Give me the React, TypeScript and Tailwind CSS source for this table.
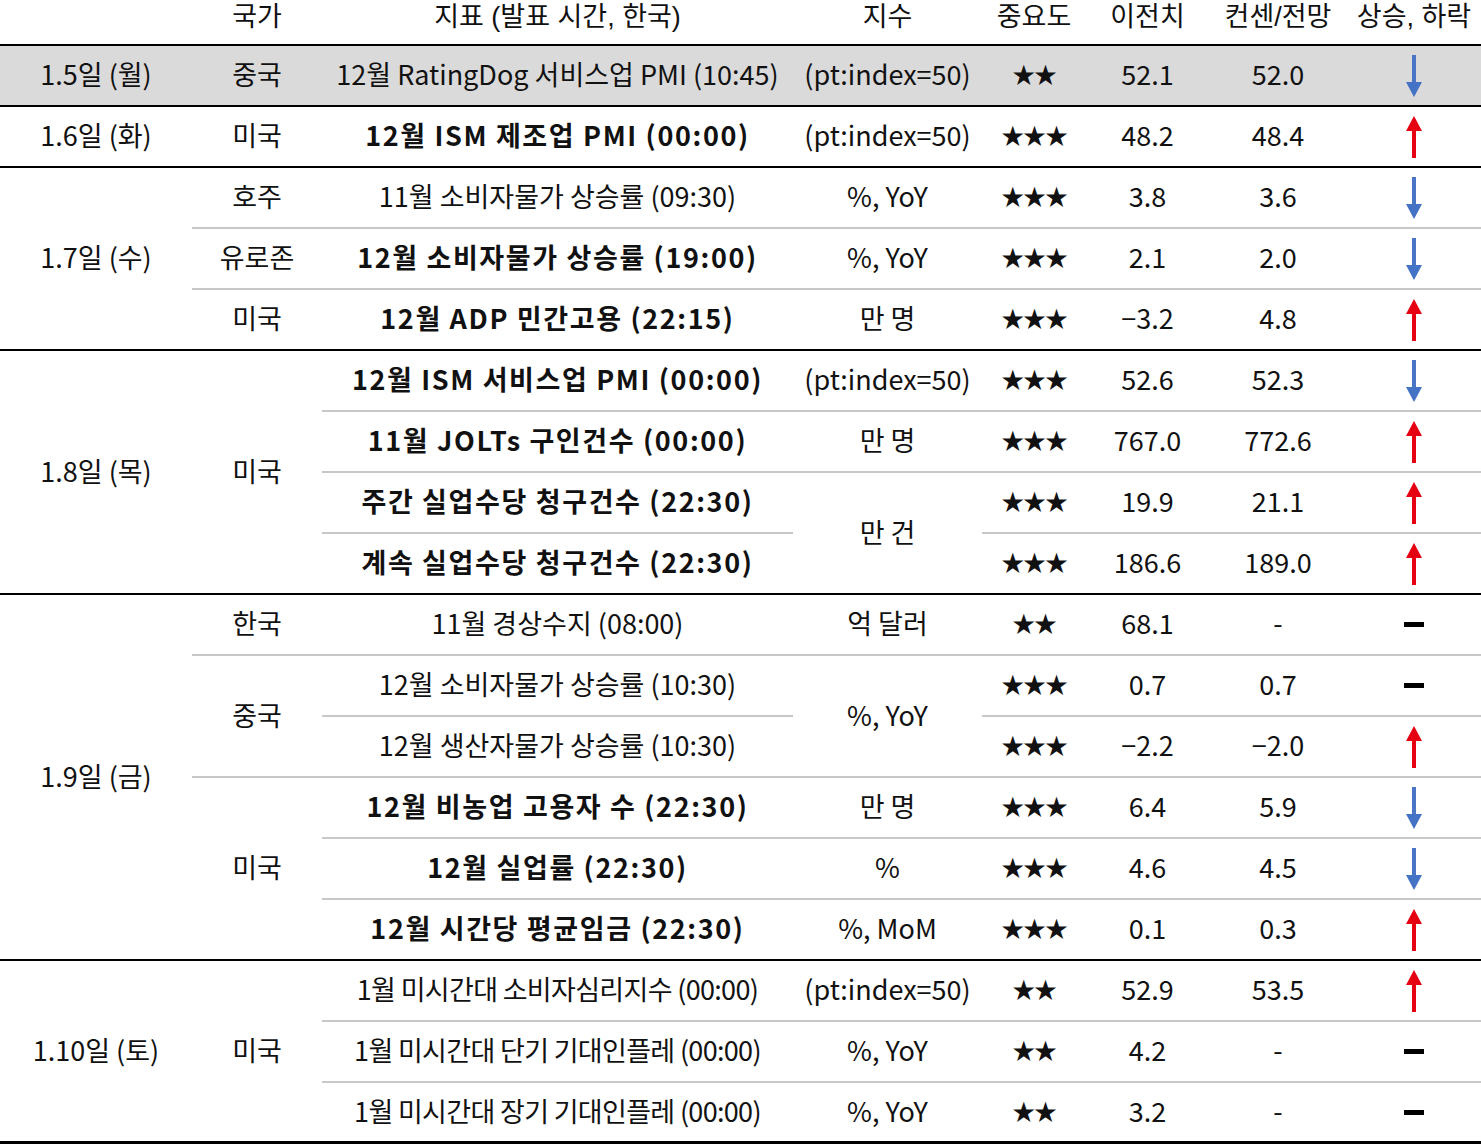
type Cell = [string, number];

type Row = {
  date?: Cell;
  country?: Cell;
  ind: string;
  bold?: boolean;
  narrow?: boolean;
  unit?: Cell;
  stars: number;
  prev: string;
  cons: string;
  dir: "up" | "down" | "flat";
  end?: boolean;
  shade?: boolean;
};

const rows: Row[] = [
  { date: ["1.5일 (월)", 1], country: ["중국", 1], ind: "12월 RatingDog 서비스업 PMI (10:45)", unit: ["(pt:index=50)", 1], stars: 2, prev: "52.1", cons: "52.0", dir: "down", end: true, shade: true },
  { date: ["1.6일 (화)", 1], country: ["미국", 1], ind: "12월 ISM 제조업 PMI (00:00)", bold: true, unit: ["(pt:index=50)", 1], stars: 3, prev: "48.2", cons: "48.4", dir: "up", end: true },
  { date: ["1.7일 (수)", 3], country: ["호주", 1], ind: "11월 소비자물가 상승률 (09:30)", unit: ["%, YoY", 1], stars: 3, prev: "3.8", cons: "3.6", dir: "down" },
  { country: ["유로존", 1], ind: "12월 소비자물가 상승률 (19:00)", bold: true, unit: ["%, YoY", 1], stars: 3, prev: "2.1", cons: "2.0", dir: "down" },
  { country: ["미국", 1], ind: "12월 ADP 민간고용 (22:15)", bold: true, unit: ["만 명", 1], stars: 3, prev: "−3.2", cons: "4.8", dir: "up", end: true },
  { date: ["1.8일 (목)", 4], country: ["미국", 4], ind: "12월 ISM 서비스업 PMI (00:00)", bold: true, unit: ["(pt:index=50)", 1], stars: 3, prev: "52.6", cons: "52.3", dir: "down" },
  { ind: "11월 JOLTs 구인건수 (00:00)", bold: true, unit: ["만 명", 1], stars: 3, prev: "767.0", cons: "772.6", dir: "up" },
  { ind: "주간 실업수당 청구건수 (22:30)", bold: true, unit: ["만 건", 2], stars: 3, prev: "19.9", cons: "21.1", dir: "up" },
  { ind: "계속 실업수당 청구건수 (22:30)", bold: true, stars: 3, prev: "186.6", cons: "189.0", dir: "up", end: true },
  { date: ["1.9일 (금)", 6], country: ["한국", 1], ind: "11월 경상수지 (08:00)", unit: ["억 달러", 1], stars: 2, prev: "68.1", cons: "-", dir: "flat" },
  { country: ["중국", 2], ind: "12월 소비자물가 상승률 (10:30)", unit: ["%, YoY", 2], stars: 3, prev: "0.7", cons: "0.7", dir: "flat" },
  { ind: "12월 생산자물가 상승률 (10:30)", stars: 3, prev: "−2.2", cons: "−2.0", dir: "up" },
  { country: ["미국", 3], ind: "12월 비농업 고용자 수 (22:30)", bold: true, unit: ["만 명", 1], stars: 3, prev: "6.4", cons: "5.9", dir: "down" },
  { ind: "12월 실업률 (22:30)", bold: true, unit: ["%", 1], stars: 3, prev: "4.6", cons: "4.5", dir: "down" },
  { ind: "12월 시간당 평균임금 (22:30)", bold: true, unit: ["%, MoM", 1], stars: 3, prev: "0.1", cons: "0.3", dir: "up", end: true },
  { date: ["1.10일 (토)", 3], country: ["미국", 3], ind: "1월 미시간대 소비자심리지수 (00:00)", narrow: true, unit: ["(pt:index=50)", 1], stars: 2, prev: "52.9", cons: "53.5", dir: "up" },
  { ind: "1월 미시간대 단기 기대인플레 (00:00)", narrow: true, unit: ["%, YoY", 1], stars: 2, prev: "4.2", cons: "-", dir: "flat" },
  { ind: "1월 미시간대 장기 기대인플레 (00:00)", narrow: true, unit: ["%, YoY", 1], stars: 2, prev: "3.2", cons: "-", dir: "flat", end: true },
];

const spanClass: Record<number, string> = {
  1: "row-span-1",
  2: "row-span-2",
  3: "row-span-3",
  4: "row-span-4",
  6: "row-span-6",
};

const headers = ["국가", "지표 (발표 시간, 한국)", "지수", "중요도", "이전치", "컨센/전망", "상승, 하락"];

function lineClass(endIdx: number) {
  if (endIdx === rows.length - 1) return "border-b-[3px] border-black";
  return rows[endIdx].end ? "border-b-2 border-black" : "border-b-2 border-[#c8c8c8]";
}

function Arrow({ dir }: { dir: Row["dir"] }) {
  if (dir === "flat") return <div className="w-5 h-[5px] bg-black" />;
  if (dir === "down")
    return (
      <svg width="20" height="44" viewBox="0 0 20 44">
        <rect x="8" y="1" width="4" height="31" fill="#4a75c5" />
        <polygon points="2,28 18,28 10,43" fill="#4472c4" />
      </svg>
    );
  return (
    <svg width="20" height="44" viewBox="0 0 20 44">
      <polygon points="10,1 18,16 2,16" fill="#e50012" />
      <rect x="8" y="12" width="4" height="31" fill="#e50012" />
    </svg>
  );
}

export default function App() {
  const cells: React.ReactNode[] = [];
  rows.forEach((r, i) => {
    const bg = r.shade ? "bg-[#dadada]" : "bg-white";
    const single = `${bg} ${lineClass(i)} flex items-center justify-center pb-1`;
    if (r.date) {
      cells.push(
        <div key={`d${i}`} className={`${spanClass[r.date[1]]} ${bg} ${lineClass(i + r.date[1] - 1)} flex items-center justify-center pb-1`}>
          {r.date[0]}
        </div>
      );
    }
    if (r.country) {
      cells.push(
        <div key={`c${i}`} className={`${spanClass[r.country[1]]} ${bg} ${lineClass(i + r.country[1] - 1)} flex items-center justify-center pb-1`}>
          {r.country[0]}
        </div>
      );
    }
    const track = r.bold ? "font-bold tracking-[0.06em]" : r.narrow ? "tracking-[-0.025em]" : "";
    cells.push(
      <div key={`i${i}`} className={`${single} whitespace-nowrap ${track}`}>
        {r.ind}
      </div>
    );
    if (r.unit) {
      cells.push(
        <div key={`u${i}`} className={`${spanClass[r.unit[1]]} ${bg} ${lineClass(i + r.unit[1] - 1)} flex items-center justify-center pb-1`}>
          {r.unit[0]}
        </div>
      );
    }
    cells.push(
      <div key={`s${i}`} className={`${single} text-[23px] tracking-[-0.05em]`}>
        {"★".repeat(r.stars)}
      </div>
    );
    cells.push(
      <div key={`p${i}`} className={single}>
        {r.prev}
      </div>
    );
    cells.push(
      <div key={`n${i}`} className={single}>
        {r.cons}
      </div>
    );
    cells.push(
      <div key={`a${i}`} className={`${bg} ${lineClass(i)} flex items-center justify-center`}>
        <Arrow dir={r.dir} />
      </div>
    );
  });

  return (
    <div className="w-[1481px] h-[1146px] bg-white text-[#111] text-[27px] leading-none font-['Noto_Sans_CJK_KR','Noto_Sans',sans-serif]">
      <div className="grid grid-cols-[192px_130px_471px_189px_104px_123px_138px_134px] grid-rows-[46px_repeat(18,61px)]">
        <div className="border-b-2 border-black" />
        {headers.map((h) => (
          <div
            key={h}
            className="border-b-2 border-black flex items-start justify-center pt-[3px] leading-[28px] whitespace-nowrap font-['Liberation_Sans','Noto_Sans_CJK_KR',sans-serif]"
          >
            {h}
          </div>
        ))}
        {cells}
      </div>
    </div>
  );
}
